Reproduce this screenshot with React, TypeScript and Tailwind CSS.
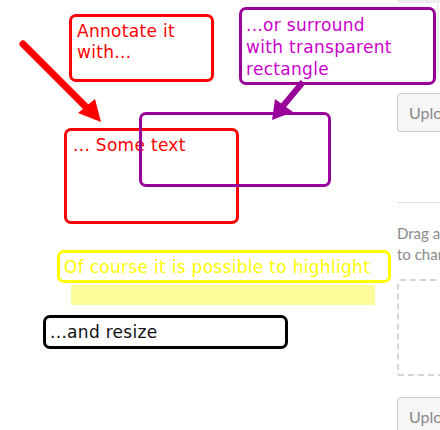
import React from "react";

const anno = { fontFamily: '"DejaVu Sans", Verdana, sans-serif', letterSpacing: "0.3px" } as React.CSSProperties;
const page = { fontFamily: 'Lato, "Open Sans", sans-serif' } as React.CSSProperties;

export default function App() {
  return (
    <div className="relative w-[440px] h-[430px] overflow-hidden bg-white">
      {/* underlying page content (right column) */}
      <div className="ml-[397px] w-[220px] flex flex-col" style={page}>
        <div className="h-[3px] bg-[#eeeeee]" />
        <div className="h-[69px] border-r-2 border-[#f0f0f0] w-[42px]" />
        <div className="mt-[21px] h-[39px] rounded-[3px] border border-[#cccccc] bg-[#f6f6f6] flex items-center pl-[11px] text-[16px] text-[#888888]">
          Upload
        </div>
        <div className="mt-[70px] h-px bg-[#dddddd]" />
        <div className="mt-[20px] text-[15px] leading-[21px] text-[#8a8a8a]">
          Drag an image here
          <br />
          to change the picture
        </div>
        <div className="mt-[14px] h-[97px] rounded-[3px] border-2 border-dashed border-[#d4d4d4]" />
        <div className="mt-[21px] h-[39px] rounded-[3px] border border-[#cccccc] bg-[#f6f6f6] flex items-center pl-[11px] text-[16px] text-[#888888]">
          Upload
        </div>
      </div>

      {/* annotation canvas */}
      <div className="absolute inset-0" style={anno}>
        <svg className="absolute left-0 top-0" width="440" height="430">
          <line x1="23" y1="44" x2="87" y2="108" stroke="#ff0000" strokeWidth="7" strokeLinecap="round" />
          <polygon points="78,113 101,122 95,99" fill="#ff0000" />
          <line x1="303" y1="82" x2="283" y2="106" stroke="#990099" strokeWidth="6" />
          <polygon points="272,120 275,99 293,112" fill="#990099" />
        </svg>

        <div className="absolute left-[69px] top-[14px] w-[145px] h-[68px] rounded-[7px] border-[3px] border-[#ff0000] px-[5px] pt-[4px] text-[17px] leading-[21px] text-[#ff0000]">
          Annotate it
          <br />
          with...
        </div>

        <div className="absolute left-[64px] top-[128px] w-[175px] h-[96px] rounded-[7px] border-[3px] border-[#ff0000] px-[6px] pt-[4px] text-[17px] leading-[21px] text-[#ff0000]">
          ... Some text
        </div>

        <div className="absolute left-[139px] top-[112px] w-[192px] h-[75px] rounded-[7px] border-[3px] border-[#990099]" />

        <div className="absolute left-[239px] top-[7px] w-[197px] h-[78px] rounded-[7px] border-[3px] border-[#990099] px-[4px] pt-[4px] text-[17px] leading-[22px] text-[#cc00cc]">
          ...or surround
          <br />
          with transparent
          <br />
          rectangle
        </div>

        <div className="absolute left-[57px] top-[250px] w-[334px] h-[33px] rounded-[7px] border-[3px] border-[#ffff00] pl-[4px] text-[17px] leading-[28px] text-[#ffff00] whitespace-nowrap">
          Of course it is possible to highlight
        </div>

        <div className="absolute left-[71px] top-[285px] w-[304px] h-[20px] bg-[#fdfd9a]" />

        <div className="absolute left-[43px] top-[315px] w-[245px] h-[34px] rounded-[7px] border-[3px] border-[#000000] pl-[4px] text-[17px] leading-[29px] text-[#111111]">
          ...and resize
        </div>
      </div>
    </div>
  );
}
